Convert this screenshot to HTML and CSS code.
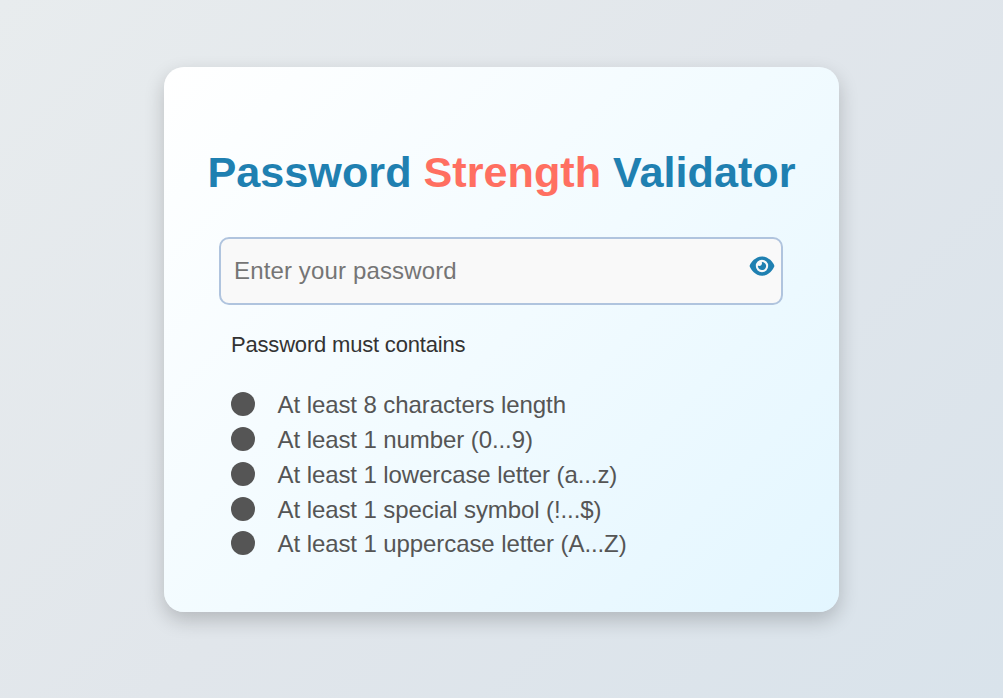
FILE: index.html
```html
<!DOCTYPE html>
<html lang="en">
<head>
<meta charset="utf-8">
<title>Password Strength Validator</title>
<link rel="stylesheet" href="styles.css">
</head>
<body>
<main class="card">
  <h1 class="title">Password <span class="accent">Strength</span> Validator</h1>
  <div class="field">
    <input class="password" type="password" placeholder="Enter your password">
    <svg class="eye" viewBox="0 0 576 512"><path fill="#1f80b1" fill-rule="evenodd" d="M288 32c-80.800 0-145.500 36.800-192.600 80.600C48.600 156 17.300 208 2.500 243.700c-3.300 7.900-3.300 16.700 0 24.600C17.300 304 48.600 356 95.400 399.400C142.500 443.200 207.200 480 288 480s145.500-36.800 192.600-80.600c46.800-43.500 78.100-95.400 93-131.100c3.300-7.900 3.300-16.700 0-24.600c-14.900-35.700-46.200-87.700-93-131.100C433.500 68.800 368.800 32 288 32zM144 256a144 144 0 1 1 288 0a144 144 0 1 1-288 0zM288 192c0 35.300-28.700 64-64 64c-7.100 0-13.900-1.200-20.300-3.300c-5.500-1.800-11.900 1.600-11.700 7.400c.3 6.900 1.300 13.800 3.200 20.700c13.700 51.200 66.400 81.600 117.600 67.900s81.600-66.400 67.900-117.600c-11.100-41.500-47.800-69.400-88.600-71.100c-5.800-.2-9.200 6.100-7.400 11.700c2.100 6.400 3.300 13.200 3.300 20.300z"/></svg>
  </div>
  <p class="heading">Password must contains</p>
  <ul class="rules">
    <li class="rule"><i class="dot"></i><span>At least 8 characters length</span></li>
    <li class="rule"><i class="dot"></i><span>At least 1 number (0...9)</span></li>
    <li class="rule"><i class="dot"></i><span>At least 1 lowercase letter (a...z)</span></li>
    <li class="rule"><i class="dot"></i><span>At least 1 special symbol (!...$)</span></li>
    <li class="rule"><i class="dot"></i><span>At least 1 uppercase letter (A...Z)</span></li>
  </ul>
</main>
</body>
</html>
```

FILE: styles.css
```css
* { box-sizing: border-box; }
body {
  margin: 0;
  height: 698px;
  padding-top: 67px;
  overflow: hidden;
  font-family: "Liberation Sans", Arial, sans-serif;
  background: linear-gradient(135deg, #e8ecee, #e1e6eb 50%, #d9e3eb);
}
.card {
  width: 675px;
  height: 545px;
  margin-left: 164px;
  padding: 76px 0 0;
  border-radius: 20px;
  background: linear-gradient(135deg, #ffffff, #f2fbff 50%, #e3f6ff);
  box-shadow: 0 8px 20px rgba(0, 0, 0, .2);
}
.title {
  margin: 0;
  height: 58px;
  line-height: 58px;
  font-size: 43.2px;
  text-align: center;
  white-space: nowrap;
  color: #1f80b1;
}
.accent { color: #ff6f61; }
.field {
  position: relative;
  width: 564px;
  height: 68px;
  margin: 36px 0 0 55px;
}
.password {
  width: 100%;
  height: 100%;
  padding: 0 55px 0 13px;
  border: 2px solid #b0c4de;
  border-radius: 10px;
  background: #f9f9f9;
  font: 24px "Liberation Sans", Arial, sans-serif;
  letter-spacing: .14px;
  color: #333;
}
.eye { position: absolute; right: 8px; top: 18px; width: 26px; height: 22px; }
.heading {
  margin: 27px 0 0 67px;
  font-size: 22px;
  letter-spacing: -.19px;
  line-height: 26px;
  color: #333;
}
.rules { margin: 34.2px 0 0 67px; padding: 0; list-style: none; }
.rule {
  display: flex;
  align-items: flex-start;
  gap: 22.6px;
  height: 34.8px;
  font-size: 24px;
  line-height: 26px;
  letter-spacing: -.09px;
  color: #555;
  white-space: nowrap;
}
.dot { width: 24px; height: 24px; border-radius: 50%; background: #555; }
```
